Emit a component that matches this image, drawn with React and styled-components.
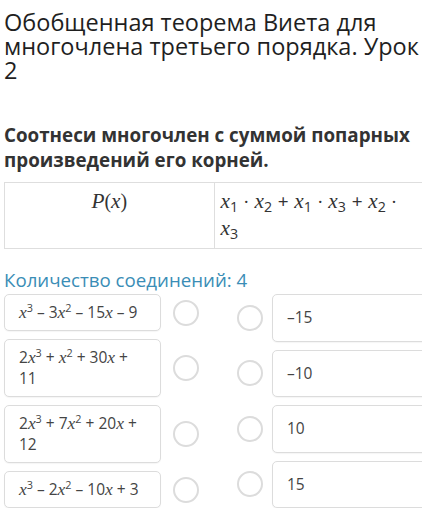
import React from "react"
import styled, { createGlobalStyle } from "styled-components"

const GlobalStyle = createGlobalStyle`
    html, body {
        margin: 0;
        padding: 0;
        background: #ffffff;
        overflow: hidden;
    }
    body {
        font-family: "Open Sans", "Liberation Sans", sans-serif;
        color: #222;
    }
`

const Page = styled.div`
    width: 420px;
    padding: 10px 0 0 4px;
`

const Title = styled.h1`
    margin: 0;
    font-size: 23.5px;
    line-height: 24px;
    font-weight: 400;
    color: #1f1f1f;
    width: 418px;
`

const Question = styled.h2`
    margin: 41px 0 0;
    font-size: 18.8px;
    line-height: 25px;
    font-weight: 700;
    color: #333;
`

const Table = styled.table`
    margin-top: 9px;
    width: 420px;
    border-collapse: collapse;
    table-layout: fixed;
`

const Cell = styled.td`
    border: 1px solid #dedede;
    vertical-align: top;
    padding: 5px 6px 6px;
    font-size: 19px;
    line-height: 27px;
    color: #333;
    text-align: ${props => props.center ? "center" : "left"};
`

const Var = styled.i`
    font-family: "Liberation Serif", "DejaVu Serif", serif;
    font-style: italic;
    font-size: 1.12em;
`

const Paren = styled.span`
    font-family: "Liberation Serif", "DejaVu Serif", serif;
    font-size: 1.05em;
`

const Op = styled.span`
    margin: 0 0.3em;
`

const Sub = styled.sub`
    font-size: 0.75em;
    vertical-align: -0.3em;
    line-height: 0;
`

const Sup = styled.sup`
    font-size: 0.7em;
    vertical-align: 0.55em;
    line-height: 0;
`

const Counter = styled.div`
    margin-top: 20px;
    font-size: 18.7px;
    line-height: 22px;
    color: #3a8db6;
`

const Board = styled.div`
    display: flex;
    margin-top: 3px;
    width: 440px;
`

const Column = styled.div`
    display: flex;
    flex-direction: column;
    gap: 8px;
    flex: ${props => props.grow ? 1 : "none"};
`

const Row = styled.div`
    display: flex;
    align-items: center;
    flex: ${props => props.grow ? 1 : "none"};
`

const Card = styled.div`
    box-sizing: border-box;
    border: 1px solid #dcdcdc;
    border-radius: 5px;
    background: #fff;
    box-shadow: 0 1px 1px rgba(0, 0, 0, 0.04);
    font-size: 15.5px;
    line-height: 21px;
    color: #444;
`

const LeftCard = styled(Card)`
    width: 157px;
    padding: 7px 10px 7px 14px;
`

const RightCard = styled(Card)`
    flex: 1;
    align-self: stretch;
    display: flex;
    align-items: center;
    padding: 0 14px;
`

const Radio = styled.span`
    box-sizing: border-box;
    width: 26px;
    height: 26px;
    flex: none;
    border: 2px solid #dcdcdc;
    border-radius: 50%;
    margin: ${props => props.side === "left" ? "0 0 0 12px" : "0 9px 0 0"};
`

const Spacer = styled.div`
    width: 38px;
    flex: none;
`

const x = <Var>x</Var>

const polynomials = [
    <>{x}<Sup>3</Sup> – 3{x}<Sup>2</Sup> – 15{x} – 9</>,
    <>2{x}<Sup>3</Sup> + {x}<Sup>2</Sup> + 30{x} +<br />11</>,
    <>2{x}<Sup>3</Sup> + 7{x}<Sup>2</Sup> + 20{x} +<br />12</>,
    <>{x}<Sup>3</Sup> – 2{x}<Sup>2</Sup> – 10{x} + 3</>,
]

const sums = ["–15", "–10", "10", "15"]

class App extends React.Component {
    render() {
        return (
            <Page>
                <GlobalStyle />
                <Title>Обобщенная теорема Виета для многочлена третьего порядка. Урок 2</Title>
                <Question>Соотнеси многочлен с суммой попарных произведений его корней.</Question>
                {this.renderTable()}
                <Counter>Количество соединений: 4</Counter>
                {this.renderBoard()}
            </Page>
        )
    }

    renderTable = () => {
        return (
            <Table>
                <tbody>
                    <tr>
                        <Cell center><Var>P</Var><Paren>(</Paren>{x}<Paren>)</Paren></Cell>
                        <Cell>
                            {x}<Sub>1</Sub><Op>·</Op>{x}<Sub>2</Sub><Op>+</Op>{x}<Sub>1</Sub><Op>·</Op>{x}<Sub>3</Sub><Op>+</Op>{x}<Sub>2</Sub><Op>·</Op><br />
                            {x}<Sub>3</Sub>
                        </Cell>
                    </tr>
                </tbody>
            </Table>
        )
    }

    renderBoard = () => {
        return (
            <Board>
                <Column>
                    {polynomials.map((item, index) => (
                        <Row key={"left " + index}>
                            <LeftCard>{item}</LeftCard>
                            <Radio side="left" />
                        </Row>
                    ))}
                </Column>
                <Spacer />
                <Column grow>
                    {sums.map(value => (
                        <Row grow key={"right " + value}>
                            <Radio side="right" />
                            <RightCard>{value}</RightCard>
                        </Row>
                    ))}
                </Column>
            </Board>
        )
    }
}

export default App
